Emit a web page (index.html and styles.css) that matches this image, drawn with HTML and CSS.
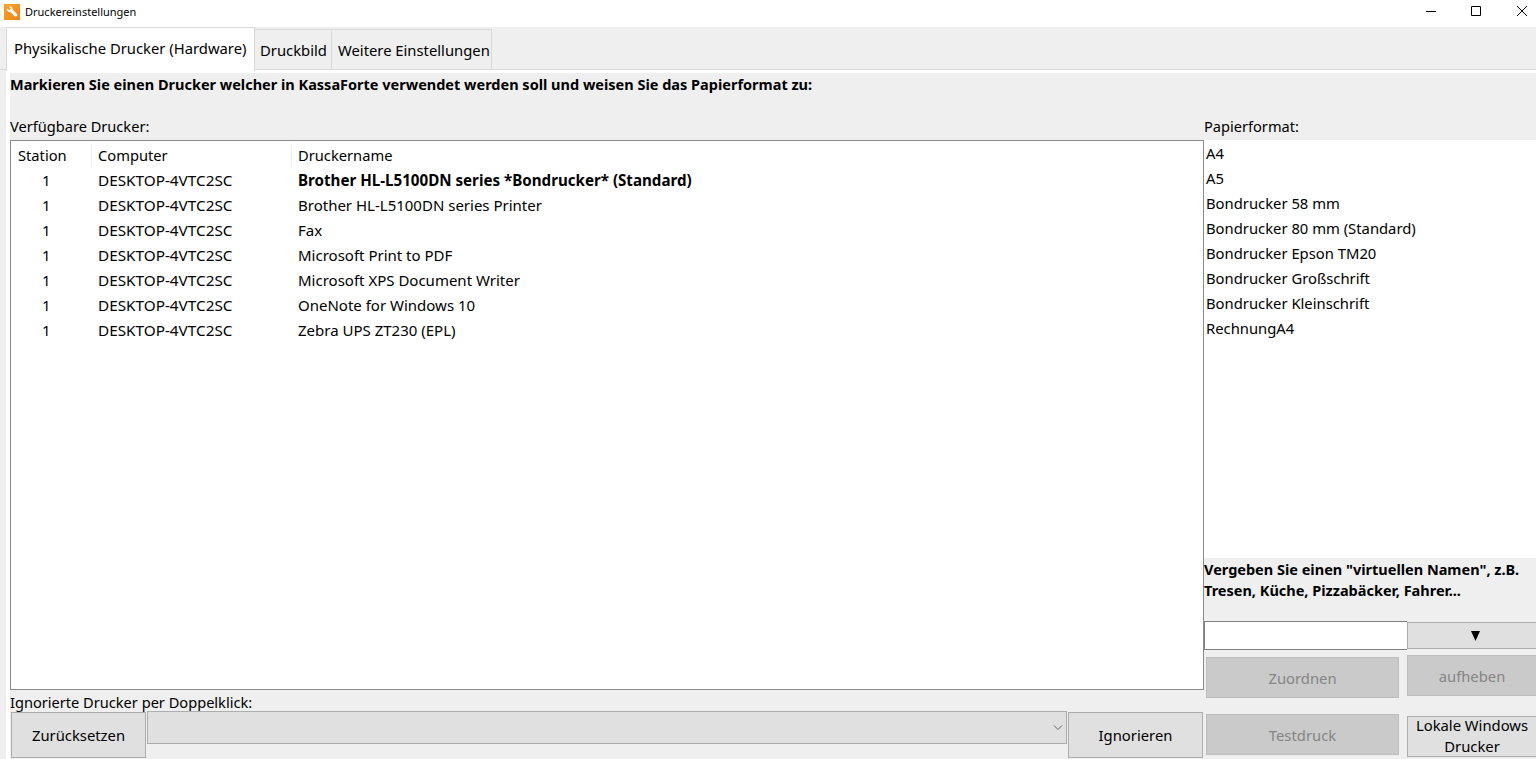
FILE: index.html
```html
<!DOCTYPE html>
<html lang="de">
<head>
<meta charset="utf-8">
<title>Druckereinstellungen</title>
<link rel="stylesheet" href="styles.css">
</head>
<body>
<div class="titlebar">
  <svg class="appicon" width="16" height="16" viewBox="0 0 16 16"><defs><linearGradient id="ic" x1="0" y1="0" x2="1" y2="1"><stop offset="0" stop-color="#f9a52e"/><stop offset="1" stop-color="#f5820f"/></linearGradient></defs><rect width="16" height="16" fill="url(#ic)"/><path d="M3 4.500l1.800 1.500 1.400-.3.300-1.400L5 2.800c1.500-.6 3-.1 3.500 1.200.2.600.2 1.100.1 1.600l4.400 4.300c.5.500.5 1.300 0 1.800l-.5.500c-.5.500-1.300.5-1.800 0L6.400 7.900c-.6.200-1.300.1-1.900-.2C3.400 7.100 2.700 5.800 3 4.500z" fill="#fff"/></svg>
  <span class="wintitle">Druckereinstellungen</span>
  <div class="winctl">
    <svg width="46" height="27" viewBox="0 0 46 27"><path d="M28 11.500h10" stroke="#000" fill="none"/></svg>
    <svg width="46" height="27" viewBox="0 0 46 27"><path d="M27.500 6.500h9v9h-9z" stroke="#000" fill="none"/></svg>
    <svg width="46" height="27" viewBox="0 0 46 27"><path d="M27 6l10 10M37 6l-10 10" stroke="#000" fill="none"/></svg>
  </div>
</div>
<div class="tabs">
  <div class="tab active">Physikalische Drucker (Hardware)</div>
  <div class="tab t2">Druckbild</div>
  <div class="tab t3">Weitere Einstellungen</div>
</div>
<div class="panel">
  <div class="content">
    <div class="leftcol">
      <div class="heading">Markieren Sie einen Drucker welcher in KassaForte verwendet werden soll und weisen Sie das Papierformat zu:</div>
      <div class="lbl avail">Verfügbare Drucker:</div>
      <div class="tablebox">
        <div class="row head"><span class="c1">Station</span><span class="c2">Computer</span><span class="c3">Druckername</span></div>
        <div class="row"><span class="c1 num">1</span><span class="c2 host">DESKTOP-4VTC2SC</span><span class="c3 b">Brother HL-L5100DN series *Bondrucker* (Standard)</span></div>
        <div class="row"><span class="c1 num">1</span><span class="c2 host">DESKTOP-4VTC2SC</span><span class="c3">Brother HL-L5100DN series Printer</span></div>
        <div class="row"><span class="c1 num">1</span><span class="c2 host">DESKTOP-4VTC2SC</span><span class="c3">Fax</span></div>
        <div class="row"><span class="c1 num">1</span><span class="c2 host">DESKTOP-4VTC2SC</span><span class="c3">Microsoft Print to PDF</span></div>
        <div class="row"><span class="c1 num">1</span><span class="c2 host">DESKTOP-4VTC2SC</span><span class="c3">Microsoft XPS Document Writer</span></div>
        <div class="row"><span class="c1 num">1</span><span class="c2 host">DESKTOP-4VTC2SC</span><span class="c3">OneNote for Windows 10</span></div>
        <div class="row"><span class="c1 num">1</span><span class="c2 host">DESKTOP-4VTC2SC</span><span class="c3">Zebra UPS ZT230 (EPL)</span></div>
      </div>
      <div class="lbl ign">Ignorierte Drucker per Doppelklick:</div>
      <div class="bottomrow">
        <div class="btn reset">Zurücksetzen</div>
        <div class="combo"><svg width="10" height="6" viewBox="0 0 10 6"><path d="M1 .5l4 4 4-4" stroke="#666" fill="none"/></svg></div>
        <div class="btn ignore">Ignorieren</div>
      </div>
    </div>
    <div class="rightcol">
      <div class="lbl paper">Papierformat:</div>
      <div class="list">
        <div>A4</div><div>A5</div><div>Bondrucker 58 mm</div><div>Bondrucker 80 mm (Standard)</div><div>Bondrucker Epson TM20</div><div>Bondrucker Großschrift</div><div>Bondrucker Kleinschrift</div><div>RechnungA4</div>
      </div>
      <div class="hint">Vergeben Sie einen "virtuellen Namen", z.B.<br>Tresen, Küche, Pizzabäcker, Fahrer...</div>
      <div class="inputrow">
        <div class="input"></div>
        <div class="btn arrow"><svg width="9" height="10" viewBox="0 0 9 10"><path d="M0 0h9L4.500 10z" fill="#000"/></svg></div>
      </div>
      <div class="actions">
        <div class="btn off assign">Zuordnen</div>
        <div class="btn off lift">aufheben</div>
        <div class="btn off test">Testdruck</div>
        <div class="btn local">Lokale Windows Drucker</div>
      </div>
    </div>
  </div>
</div>
</body>
</html>
```
FILE: styles.css
```css
* { box-sizing: border-box; }
html, body { margin: 0; padding: 0; }
body {
  width: 1536px; height: 759px; overflow: hidden;
  background: #efefef; color: #000;
  font-family: "Noto Sans", "Open Sans", sans-serif;
  font-size: 14.6px; line-height: 25px;
}
.titlebar { height: 27px; background: #fff; display: flex; align-items: center; padding-left: 4px; }
.appicon { margin-top: -3px; }
.wintitle { font-size: 11px; margin-left: 5px; margin-top: -3px; line-height: 16px; }
.winctl { margin-left: auto; display: flex; height: 27px; }
.tabs { height: 43px; display: flex; padding-left: 6px; align-items: flex-start; border-bottom: 1px solid #d9d9d9; background: #efefef; }
.tab { background: #efefef; border: 1px solid #d9d9d9; border-left: 0; height: 41px; margin-top: 2px; line-height: 41px; font-size: 14.8px; white-space: nowrap; }
.tab.active { background: #fff; height: 44px; margin-top: 0; padding-left: 7px; line-height: 41px; border-bottom: 0; border-left: 1px solid #d9d9d9; width: 249px; position: relative; }
.t2 { width: 77px; padding-left: 5px; }
.t3 { width: 160px; padding-left: 6px; }
.panel { background: #fff; margin-left: 6px; padding: 3px 0 0 4px; height: 689px; }
.content { display: flex; background: #efefef; height: 686px; }
.leftcol { width: 1194px; display: flex; flex-direction: column; }
.heading { font-weight: 700; font-size: 14.5px; height: 24px; line-height: 22px; white-space: nowrap; width: 1000px; }
.lbl { white-space: nowrap; }
.avail { margin-top: 18px; height: 25px; line-height: 22px; }
.tablebox { height: 550px; background: #fff; border: 1px solid #8a8a8a; padding-top: 2px; font-size: 15px; }
.row { display: flex; height: 25px; white-space: nowrap; }
.head { font-size: 14.7px; }
.head span { border-right: 1px solid #eee; }
.c1 { width: 81px; padding-left: 7px; }
.c2 { width: 200px; padding-left: 6px; }
.host { font-size: 15.3px; }
.c3 { padding-left: 6px; }
.head .c3 { border-right: 0; }
.row .num { padding-left: 31px; }
.b { font-weight: 700; font-size: 15.15px; }
.ign { height: 22px; line-height: 24px; }
.bottomrow { display: flex; align-items: flex-start; padding-left: 1px; }
.btn { background: #e0e0e0; border: 1px solid #adadad; display: flex; align-items: center; justify-content: center; text-align: center; line-height: 21px; font-size: 14.8px; }
.reset { width: 135px; height: 46px; }
.combo { width: 920px; height: 33px; margin: -1px 1px 0; background: #e0e0e0; border: 1px solid #adadad; display: flex; align-items: center; justify-content: flex-end; padding: 0 3px 0 0; }
.ignore { width: 135px; height: 46px; }
.rightcol { width: 332px; display: flex; flex-direction: column; }
.paper { margin-top: 42px; height: 25px; line-height: 22px; }
.list { height: 418px; background: #fff; padding: 1px 0 0 2px; font-size: 14.8px; }
.list div { height: 25px; white-space: nowrap; }
.hint { font-weight: 700; font-size: 14.5px; line-height: 21px; height: 63px; padding-top: 1px; white-space: nowrap; }
.inputrow { display: flex; align-items: flex-start; }
.input { width: 203px; height: 29px; background: #fff; border-top: 1px solid #808080; border-left: 1px solid #808080; border-bottom: 1px solid #808080; }
.arrow { width: 129px; height: 27px; margin-top: 1px; border-right: 0; padding-left: 7px; }
.actions { display: grid; grid-template-columns: 193px 129px; column-gap: 8px; margin-left: 2px; }
.off { background: #cacaca; color: #858585; border-color: #bdbdbd; }
.assign { height: 41px; margin-top: 7px; padding-top: 2px; }
.lift { height: 41px; margin-top: 5px; border-right: 0; padding-top: 1px; }
.test { height: 41px; margin-top: 16px; padding-top: 1px; }
.local { height: 41px; margin-top: 18px; border-right: 0; padding: 0 1px 2px; }
```
